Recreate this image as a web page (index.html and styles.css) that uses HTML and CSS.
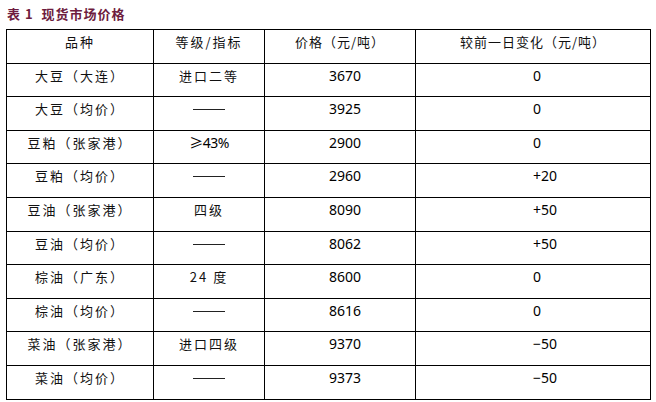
FILE: index.html
```html
<!DOCTYPE html>
<html lang="zh">
<head>
<meta charset="utf-8">
<link rel="stylesheet" href="styles.css">
</head>
<body>
<div class="title">表 1&nbsp; 现货市场价格</div>
<table class="grid">
  <colgroup>
    <col class="c1"><col class="c2"><col class="c3"><col class="c4">
  </colgroup>
  <tr class="head"><td>品种</td><td>等级/指标</td><td class="hc">价格（元/吨）</td><td class="hc">较前一日变化（元/吨）</td></tr>
  <tr><td>大豆（大连）</td><td>进口二等</td><td class="num">3670</td><td class="chg">0</td></tr>
  <tr><td>大豆（均价）</td><td><span class="dash"></span></td><td class="num">3925</td><td class="chg">0</td></tr>
  <tr><td>豆粕（张家港）</td><td class="lat">≥43%</td><td class="num">2900</td><td class="chg">0</td></tr>
  <tr><td>豆粕（均价）</td><td><span class="dash"></span></td><td class="num">2960</td><td class="chg">+20</td></tr>
  <tr><td>豆油（张家港）</td><td>四级</td><td class="num">8090</td><td class="chg">+50</td></tr>
  <tr><td>豆油（均价）</td><td><span class="dash"></span></td><td class="num">8062</td><td class="chg">+50</td></tr>
  <tr><td>棕油（广东）</td><td>24 度</td><td class="num">8600</td><td class="chg">0</td></tr>
  <tr><td>棕油（均价）</td><td><span class="dash"></span></td><td class="num">8616</td><td class="chg">0</td></tr>
  <tr><td>菜油（张家港）</td><td>进口四级</td><td class="num">9370</td><td class="chg">−50</td></tr>
  <tr><td>菜油（均价）</td><td><span class="dash"></span></td><td class="num">9373</td><td class="chg">−50</td></tr>
</table>
</body>
</html>
```
FILE: styles.css
```css
html, body {
  margin: 0;
  padding: 0;
  background: #fff;
}
body {
  font-family: "Noto Sans CJK SC", "Noto Sans", sans-serif;
  color: #111;
}
.title {
  height: 29px;
  box-sizing: border-box;
  padding: 5px 0 0 7px;
  font-size: 13px;
  line-height: 18px;
  font-weight: 700;
  color: #6e1c3e;
  letter-spacing: 1px;
}
.grid {
  margin-left: 6px;
  width: 644px;
  border-collapse: collapse;
  table-layout: fixed;
}
.c1 { width: 147px; }
.c2 { width: 111px; }
.c3 { width: 151px; }
.c4 { width: 235px; }
.grid td {
  border: 1.5px solid #000;
  height: 33.6px;
  box-sizing: border-box;
  padding: 4px 0 0 0;
  vertical-align: top;
  text-align: center;
  font-size: 13px;
  line-height: 15px;
  letter-spacing: 2px;
  white-space: nowrap;
}
.grid td.num,
.grid td.chg {
  text-align: left;
  letter-spacing: 0;
  font-family: "Noto Sans", "Liberation Sans", sans-serif;
  font-size: 14px;
  color: #000;
}
.grid td.num { padding-left: 64px; }
.grid td.chg { padding-left: 117px; }
.grid td.lat {
  letter-spacing: -0.5px;
  font-family: "Noto Sans", "Noto Sans CJK SC", sans-serif;
  font-size: 14px;
  color: #000;
}
.grid td.hc {
  letter-spacing: 1px;
}
.dash {
  display: inline-block;
  width: 32px;
  height: 1px;
  background: #222;
  vertical-align: middle;
  margin-top: -2px;
}
```
